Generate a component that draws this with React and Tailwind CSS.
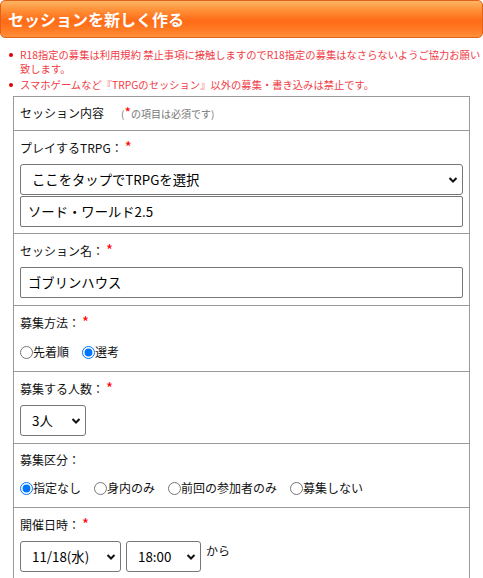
import { useState } from "react";

function Req() {
  return <span className="ml-[2px] text-[15px] leading-none text-[#ff0000]">*</span>;
}

function Chevron() {
  return (
    <svg
      width="10"
      height="7"
      viewBox="0 0 10 7"
      className="pointer-events-none absolute right-[5px] top-1/2 -translate-y-1/2"
    >
      <path d="M1.5 1.5 L5 5 L8.5 1.5" fill="none" stroke="#111" strokeWidth="2" />
    </svg>
  );
}

function Select({ value, options, className }) {
  return (
    <div className={`relative ${className}`}>
      <select
        defaultValue={value}
        className="h-[31px] w-full appearance-none rounded-[3px] border border-[#767676] bg-white pl-[11px] pr-[20px] text-[13.33px] text-black"
      >
        {options.map((o) => (
          <option key={o}>{o}</option>
        ))}
      </select>
      <Chevron />
    </div>
  );
}

function Radio({ name, label, checked, onChange }) {
  return (
    <label className="mr-[13px] inline-flex items-center">
      <input
        type="radio"
        name={name}
        checked={checked}
        onChange={onChange}
        className="h-[13px] w-[13px]"
      />
      <span>{label}</span>
    </label>
  );
}

function Label({ children, required }) {
  return (
    <div className="h-[18px] overflow-visible leading-[18px]">
      {children}
      {required && <Req />}
    </div>
  );
}

export default function App() {
  const [method, setMethod] = useState("senko");
  const [kubun, setKubun] = useState("none");

  return (
    <div className="min-h-screen bg-white font-['Meiryo','Noto_Sans_CJK_JP',sans-serif] text-[12px] text-[#111]">
      <h1 className="flex h-[38px] items-center rounded-[5px] border border-[#e2621b] bg-[linear-gradient(to_bottom,#ffb462_0%,#ff8d34_28%,#ff6a16_55%,#ff7b24_80%,#ff8f3a_100%)] pl-[7px] text-[16px] font-bold text-white">
        セッションを新しく作る
      </h1>

      <ul className="mt-[10px] mb-[4px] pl-[20px] pr-[4px] text-[10.3px] leading-[14px] text-[#f03c46]">
        <li className="relative mb-[2px] whitespace-nowrap">
          <span className="absolute left-[-11px] top-[5px] h-[4px] w-[4px] rounded-full bg-[#e00000]"></span>
          R18指定の募集は利用規約 禁止事項に接触しますのでR18指定の募集はなさらないようご協力お願い
          <br />
          致します。
        </li>
        <li className="relative">
          <span className="absolute left-[-11px] top-[5px] h-[4px] w-[4px] rounded-full bg-[#e00000]"></span>
          スマホゲームなど『TRPGのセッション』以外の募集・書き込みは禁止です。
        </li>
      </ul>

      <div className="mx-[13px] border-x border-t border-[#999]">
        {/* header row */}
        <div className="flex h-[34px] items-center border-b border-[#999] px-[6px] pb-[1px]">
          <span>セッション内容</span>
          <span className="ml-[17px] text-[10px] text-[#777]">
            (<span className="text-[14px] leading-none text-[#ff0000]">*</span>の項目は必須です)
          </span>
        </div>

        {/* TRPG */}
        <div className="border-b border-[#999] px-[6px] pt-[8px] pb-[6px]">
          <Label required>プレイするTRPG：</Label>
          <Select
            className="mt-[7px]"
            value="ここをタップでTRPGを選択"
            options={["ここをタップでTRPGを選択", "ソード・ワールド2.5", "クトゥルフ神話TRPG"]}
          />
          <input
            type="text"
            defaultValue="ソード・ワールド2.5"
            className="mt-[1px] h-[31px] w-full rounded-[2px] border border-[#767676] bg-white px-[7px] text-[13.33px] text-black"
          />
        </div>

        {/* session name */}
        <div className="border-b border-[#999] px-[6px] pt-[8px] pb-[7px]">
          <Label required>セッション名：</Label>
          <input
            type="text"
            defaultValue="ゴブリンハウス"
            className="mt-[7px] h-[31px] w-full rounded-[2px] border border-[#767676] bg-white px-[7px] text-[13.33px] text-black"
          />
        </div>

        {/* method */}
        <div className="border-b border-[#999] px-[6px] pt-[8px] pb-[10px]">
          <Label required>募集方法：</Label>
          <div className="mt-[11px] flex h-[18px] items-center">
            <Radio name="method" label="先着順" checked={method === "first"} onChange={() => setMethod("first")} />
            <Radio name="method" label="選考" checked={method === "senko"} onChange={() => setMethod("senko")} />
          </div>
        </div>

        {/* number */}
        <div className="border-b border-[#999] px-[6px] pt-[8px] pb-[7px]">
          <Label required>募集する人数：</Label>
          <Select
            className="mt-[7px] w-[66px]"
            value="3人"
            options={["1人", "2人", "3人", "4人", "5人", "6人"]}
          />
        </div>

        {/* kubun */}
        <div className="border-b border-[#999] px-[6px] pt-[7px] pb-[10px]">
          <Label>募集区分：</Label>
          <div className="mt-[10px] flex h-[18px] items-center">
            <Radio name="kubun" label="指定なし" checked={kubun === "none"} onChange={() => setKubun("none")} />
            <Radio name="kubun" label="身内のみ" checked={kubun === "inner"} onChange={() => setKubun("inner")} />
            <Radio name="kubun" label="前回の参加者のみ" checked={kubun === "prev"} onChange={() => setKubun("prev")} />
            <Radio name="kubun" label="募集しない" checked={kubun === "no"} onChange={() => setKubun("no")} />
          </div>
        </div>

        {/* date */}
        <div className="px-[6px] pt-[8px] pb-[20px]">
          <Label required>開催日時：</Label>
          <div className="mt-[7px] flex items-start gap-[5px]">
            <Select
              className="w-[101px]"
              value="11/18(水)"
              options={["11/18(水)", "11/19(木)", "11/20(金)"]}
            />
            <Select
              className="w-[75px]"
              value="18:00"
              options={["17:00", "18:00", "19:00", "20:00"]}
            />
            <span className="mt-[1px] leading-[18px]">から</span>
          </div>
        </div>
      </div>
    </div>
  );
}
